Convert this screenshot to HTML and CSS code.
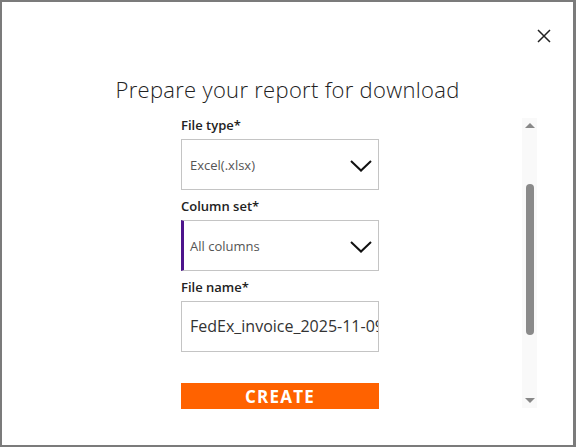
FILE: index.html
```html
<!DOCTYPE html>
<html lang="en">
<head>
  <meta charset="UTF-8" />
  <meta name="viewport" content="width=device-width, initial-scale=1.0"/>
  <title>Prepare your report for download</title>
  <link rel="stylesheet" href="styles.css">
</head>
<body>
  <div class="modal">
    <div class="modal-top">
      <button class="close-btn" aria-label="Close">
        <svg width="14" height="14" viewBox="0 0 14 14">
          <path d="M1 1 L13 13 M13 1 L1 13" stroke="#222" stroke-width="1.5" fill="none"/>
        </svg>
      </button>
    </div>

    <div class="title">Prepare your report for download</div>

    <div class="body-row">
      <div class="form">
        <label class="field-label">File type*</label>
        <div class="select">
          <span>Excel(.xlsx)</span>
          <svg class="chevron" width="22" height="12" viewBox="0 0 22 12">
            <path d="M1 1 L11 10.5 L21 1" stroke="#111" stroke-width="2" fill="none"/>
          </svg>
        </div>

        <label class="field-label">Column set*</label>
        <div class="select focused">
          <span>All columns</span>
          <svg class="chevron" width="22" height="12" viewBox="0 0 22 12">
            <path d="M1 1 L11 10.5 L21 1" stroke="#111" stroke-width="2" fill="none"/>
          </svg>
        </div>

        <label class="field-label">File name*</label>
        <div class="text-input">FedEx_invoice_2025-11-09</div>

        <button class="create-btn">CREATE</button>
      </div>

      <div class="scrollbar">
        <div class="arrow up"></div>
        <div class="track"><div class="thumb"></div></div>
        <div class="arrow down"></div>
      </div>
    </div>
  </div>
</body>
</html>
```

FILE: styles.css
```css
body {
  margin: 0;
  padding: 0;
  font-family: 'Open Sans', sans-serif;
  background: #fff;
}
.modal {
  width: 576px;
  height: 447px;
  box-sizing: border-box;
  border: 2px solid #7b7b7b;
  border-right-width: 3px;
  background: #fff;
  display: flex;
  flex-direction: column;
}
.modal-top {
  display: flex;
  justify-content: flex-end;
  padding: 27px 22px 0 0;
}
.close-btn {
  background: none;
  border: none;
  padding: 0;
  width: 14px;
  height: 14px;
  cursor: pointer;
}
.title {
  margin-top: 31px;
  text-align: center;
  font-size: 22px;
  font-weight: 300;
  letter-spacing: 0.3px;
  color: #222;
  line-height: 30px;
}
.body-row {
  display: flex;
  margin-top: 9px;
}
.form {
  width: 198px;
  margin-left: 179px;
  display: flex;
  flex-direction: column;
}
.field-label {
  font-size: 13px;
  font-weight: 600;
  color: #222;
  line-height: 18px;
  margin-top: 3px;
  margin-bottom: 5px;
}
.select {
  height: 51px;
  box-sizing: border-box;
  border: 1px solid #c4c4c4;
  display: flex;
  align-items: center;
  justify-content: space-between;
  padding: 0 6px 0 8px;
  font-size: 13px;
  color: #555;
  margin-bottom: 4px;
}
.select.focused {
  border-left: 3px solid #4d148c;
  padding-left: 6px;
}
.chevron {
  margin-top: 2px;
}
.text-input {
  height: 51px;
  box-sizing: border-box;
  border: 1px solid #c4c4c4;
  padding: 0 0 0 8px;
  font-size: 16px;
  color: #333;
  line-height: 49px;
  white-space: nowrap;
  overflow: hidden;
}
.create-btn {
  margin-top: 31px;
  height: 26px;
  border: none;
  background: #ff6200;
  color: #fff;
  font-family: 'Open Sans', sans-serif;
  font-weight: 700;
  font-size: 17px;
  letter-spacing: 1.2px;
  padding: 0;
  cursor: pointer;
}
.scrollbar {
  margin-left: 143px;
  margin-top: 5px;
  width: 15px;
  height: 290px;
  background: #f9f9f9;
  display: flex;
  flex-direction: column;
  align-items: center;
}
.arrow {
  width: 0;
  height: 0;
  border-left: 5px solid transparent;
  border-right: 5px solid transparent;
  margin: 5px 0;
}
.arrow.up {
  border-bottom: 5px solid #888;
}
.arrow.down {
  border-top: 5px solid #888;
}
.track {
  flex: 1;
  width: 100%;
  display: flex;
  justify-content: center;
}
.thumb {
  width: 8px;
  height: 151px;
  margin-top: 51px;
  background: #8a8a8a;
  border-radius: 4px;
}
```
